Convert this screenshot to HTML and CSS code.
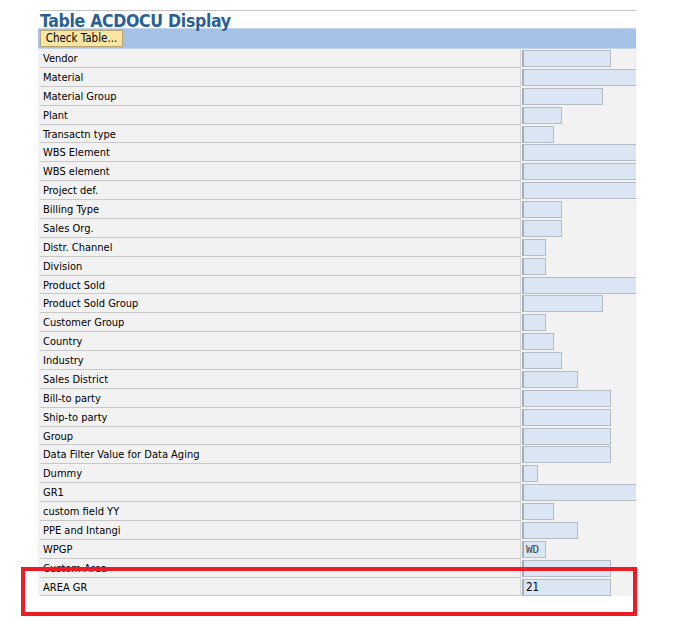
FILE: index.html
```html
<!DOCTYPE html>
<html>
<head>
<meta charset="utf-8">
<link rel="stylesheet" href="styles.css">
</head>
<body>
<div class="page">
  <div class="topline"></div>
  <h1 class="title">Table ACDOCU Display</h1>
  <div class="toolbar"><button class="btn">Check Table...</button></div>
  <div class="rows">
    <div class="row"><div class="label">Vendor</div><div class="cell"><div class="field" style="width:89px"></div></div></div>
    <div class="row"><div class="label">Material</div><div class="cell"><div class="field full"></div></div></div>
    <div class="row"><div class="label">Material Group</div><div class="cell"><div class="field" style="width:81px"></div></div></div>
    <div class="row"><div class="label">Plant</div><div class="cell"><div class="field" style="width:40px"></div></div></div>
    <div class="row"><div class="label">Transactn type</div><div class="cell"><div class="field" style="width:32px"></div></div></div>
    <div class="row"><div class="label">WBS Element</div><div class="cell"><div class="field full"></div></div></div>
    <div class="row"><div class="label">WBS element</div><div class="cell"><div class="field full"></div></div></div>
    <div class="row"><div class="label">Project def.</div><div class="cell"><div class="field full"></div></div></div>
    <div class="row"><div class="label">Billing Type</div><div class="cell"><div class="field" style="width:40px"></div></div></div>
    <div class="row"><div class="label">Sales Org.</div><div class="cell"><div class="field" style="width:40px"></div></div></div>
    <div class="row"><div class="label">Distr. Channel</div><div class="cell"><div class="field" style="width:24px"></div></div></div>
    <div class="row"><div class="label">Division</div><div class="cell"><div class="field" style="width:24px"></div></div></div>
    <div class="row"><div class="label">Product Sold</div><div class="cell"><div class="field full"></div></div></div>
    <div class="row"><div class="label">Product Sold Group</div><div class="cell"><div class="field" style="width:81px"></div></div></div>
    <div class="row"><div class="label">Customer Group</div><div class="cell"><div class="field" style="width:24px"></div></div></div>
    <div class="row"><div class="label">Country</div><div class="cell"><div class="field" style="width:32px"></div></div></div>
    <div class="row"><div class="label">Industry</div><div class="cell"><div class="field" style="width:40px"></div></div></div>
    <div class="row"><div class="label">Sales District</div><div class="cell"><div class="field" style="width:56px"></div></div></div>
    <div class="row"><div class="label">Bill-to party</div><div class="cell"><div class="field" style="width:89px"></div></div></div>
    <div class="row"><div class="label">Ship-to party</div><div class="cell"><div class="field" style="width:89px"></div></div></div>
    <div class="row"><div class="label">Group</div><div class="cell"><div class="field" style="width:89px"></div></div></div>
    <div class="row"><div class="label">Data Filter Value for Data Aging</div><div class="cell"><div class="field" style="width:89px"></div></div></div>
    <div class="row"><div class="label">Dummy</div><div class="cell"><div class="field" style="width:16px"></div></div></div>
    <div class="row"><div class="label">GR1</div><div class="cell"><div class="field full"></div></div></div>
    <div class="row"><div class="label">custom field YY</div><div class="cell"><div class="field" style="width:32px"></div></div></div>
    <div class="row"><div class="label">PPE and Intangi</div><div class="cell"><div class="field" style="width:56px"></div></div></div>
    <div class="row"><div class="label">WPGP</div><div class="cell"><div class="field mono" style="width:24px">WD</div></div></div>
    <div class="row"><div class="label">Custom Area</div><div class="cell"><div class="field" style="width:89px"></div></div></div>
    <div class="row"><div class="label">AREA GR</div><div class="cell"><div class="field" style="width:89px">21</div></div></div>
  </div>
</div>
<div class="highlight"></div>
</body>
</html>
```

FILE: styles.css
```css
html, body {
  margin: 0;
  padding: 0;
  background: #ffffff;
}
body {
  width: 686px;
  height: 621px;
  overflow: hidden;
  position: relative;
  font-family: "DejaVu Sans Condensed", "DejaVu Sans", sans-serif;
}
.page {
  margin-left: 38px;
  width: 598px;
  padding-top: 10px;
}
.topline {
  border-top: 1px solid #c6c6c6;
  margin-left: 2px;
}
.title {
  margin: 0;
  padding-left: 2px;
  height: 17px;
  line-height: 20px;
  font-family: "DejaVu Sans Condensed", "DejaVu Sans", sans-serif;
  font-weight: bold;
  font-size: 17.5px;
  letter-spacing: -0.3px;
  color: #2b5f96;
  overflow: visible;
}
.toolbar {
  height: 19px;
  background: #a4c1e6;
  border-top: 1px solid #c3d6ee;
  border-bottom: 1px solid #c3d6ee;
  display: flex;
  align-items: flex-start;
  padding-left: 2px;
}
.btn {
  margin: 1px 0 0 0;
  height: 17px;
  width: 83px;
  padding: 0;
  background: #fbe5a2;
  border: 1px solid #b8a56e;
  border-radius: 1px;
  font-family: "DejaVu Sans Condensed", "DejaVu Sans", sans-serif;
  font-size: 11.5px;
  color: #000;
  line-height: 15px;
}
.rows {
  display: flex;
  flex-direction: column;
  background: #f2f2f2;
}
.row {
  display: flex;
  height: 18.88px;
}
.label {
  width: 481px;
  margin-left: 2px;
  box-sizing: border-box;
  padding-left: 3px;
  padding-top: 1px;
  border-bottom: 1px solid #c8c8c8;
  border-right: 1px solid #d4d4d4;
  background: #f2f2f2;
  font-size: 11px;
  line-height: 18px;
  color: #000;
  white-space: nowrap;
  overflow: visible;
}
.cell {
  flex: 1;
  padding-left: 1px;
  padding-top: 1px;
  overflow: hidden;
}
.field {
  height: 17px;
  box-sizing: border-box;
  background: #dae6f3;
  border: 1px solid #b6bcc4;
  border-left: 2px solid #a9adb3;
  font-size: 11.5px;
  line-height: 15px;
  padding-left: 2px;
  color: #000;
}
.field.full {
  width: 120px;
}
.field.mono {
  font-family: "DejaVu Sans Mono", monospace;
  font-size: 11px;
  color: #444;
}
.highlight {
  position: absolute;
  left: 21px;
  top: 567px;
  width: 616px;
  height: 49px;
  box-sizing: border-box;
  border: 4px solid #ed1c24;
}
```
